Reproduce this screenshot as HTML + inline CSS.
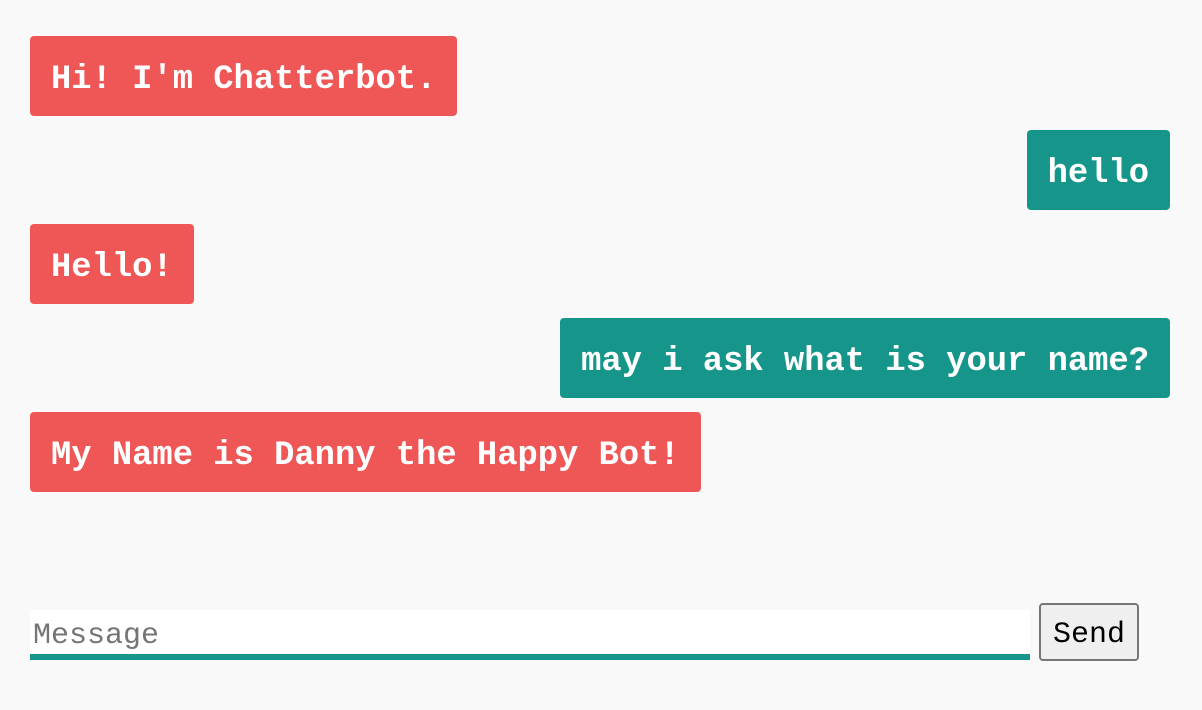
<!DOCTYPE html>
<html><head><style>
html,body{margin:0;padding:0;background:#f9f9f9;width:1202px;height:710px;overflow:hidden}
.b{position:absolute;height:80px;padding:8px 21px 0;border-radius:4px;color:#fff;font:bold 33.8px "Liberation Mono",monospace;line-height:72px;white-space:pre;box-sizing:border-box}
.r{background:#ef5656;left:30px}
.t{background:#16968a;right:32px}
#in{position:absolute;left:30px;top:610px;width:997px;height:44px;background:#fff;border-bottom:6px solid #16968a;font:30px "Liberation Mono",monospace;line-height:52px;color:#757575;padding-left:3px;box-sizing:content-box;overflow:hidden}
#send{position:absolute;left:1039px;top:603px;width:100px;height:58px;box-sizing:border-box;border:2px solid #767676;border-radius:4px;background:#efefef;font:30px "Liberation Mono",monospace;line-height:60px;text-align:center;color:#000}
</style></head><body>
<div class="b r" style="top:36px">Hi! I'm Chatterbot.</div>
<div class="b t" style="top:130px">hello</div>
<div class="b r" style="top:224px">Hello!</div>
<div class="b t" style="top:318px">may i ask what is your name?</div>
<div class="b r" style="top:412px">My Name is Danny the Happy Bot!</div>
<div id="in">Message</div>
<div id="send">Send</div>
</body></html>
